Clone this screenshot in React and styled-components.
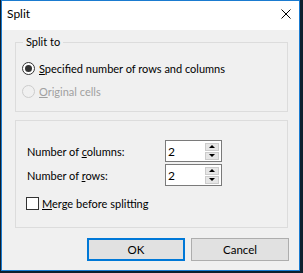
import React from "react";
import styled, { createGlobalStyle } from "styled-components";

const Global = createGlobalStyle`
  html, body {
    margin: 0;
    padding: 0;
    background: #0f1f2e;
  }
  body {
    font-family: Lato, "Segoe UI", sans-serif;
    font-size: 11px;
    color: #000;
  }
`;

const Window = styled.div`
  box-sizing: border-box;
  width: 299px;
  height: 271px;
  margin-left: 1px;
  border: 1px solid #1a7bd0;
  background: #f0f0f0;
  display: flex;
  flex-direction: column;
`;

const TitleBar = styled.div`
  height: 29px;
  background: #fff;
  display: flex;
  align-items: center;
  justify-content: space-between;
  padding: 0 8px 0 5px;
`;

const Title = styled.span`
  font-size: 12px;
  line-height: 16px;
  margin-top: -3px;
`;

const Close = styled.svg`
  width: 10px;
  height: 10px;
  margin-top: -4px;
`;

const Body = styled.div`
  display: flex;
  flex-direction: column;
  padding: 0 11px 0 13px;
`;

const Group = styled.div`
  position: relative;
  box-sizing: border-box;
  height: ${(p) => p.h}px;
  margin-top: ${(p) => p.top}px;
  border: 1px solid #dcdcdc;
  display: flex;
  flex-direction: column;
  padding: ${(p) => p.pad};
`;

const Legend = styled.span`
  position: absolute;
  top: -9px;
  left: 7px;
  padding: 0 3px;
  background: #f0f0f0;
  line-height: 16px;
`;

const RadioRow = styled.label`
  height: 22px;
  display: flex;
  align-items: center;
  margin-left: 6px;
  color: ${(p) => (p.disabled ? "#a0a0a0" : "#000")};
  & + & {
    margin-top: 1px;
  }
`;

const RadioDot = styled.span`
  box-sizing: border-box;
  width: 13px;
  height: 13px;
  border-radius: 50%;
  border: 1px solid ${(p) => (p.disabled ? "#cccccc" : "#333")};
  background: ${(p) => (p.disabled ? "#f0f0f0" : "#fff")};
  display: flex;
  align-items: center;
  justify-content: center;
  margin-right: 4px;
  &::after {
    content: "";
    display: ${(p) => (p.checked ? "block" : "none")};
    width: 7px;
    height: 7px;
    border-radius: 50%;
    background: #333;
  }
`;

const FieldGrid = styled.div`
  display: grid;
  grid-template-columns: 138px 57px;
  row-gap: 2px;
  align-items: center;
`;

const SpinBox = styled.div`
  box-sizing: border-box;
  height: 22px;
  border: 1px solid #7a7a7a;
  background: #fff;
  display: flex;
  align-items: center;
  justify-content: space-between;
  padding: 0 2px 0 2px;
  font-size: 12px;
`;

const SpinButtons = styled.div`
  display: flex;
  flex-direction: column;
  gap: 1px;
`;

const SpinBtn = styled.div`
  box-sizing: border-box;
  width: 14px;
  height: 8px;
  background: #e6e6e6;
  border: 1px solid #cccccc;
  display: flex;
  align-items: center;
  justify-content: center;
  &::after {
    content: "";
    width: 0;
    height: 0;
    border-left: 3px solid transparent;
    border-right: 3px solid transparent;
    ${(p) =>
      p.up
        ? "border-bottom: 3px solid #000;"
        : "border-top: 3px solid #000;"}
  }
`;

const CheckRow = styled.label`
  display: flex;
  align-items: center;
  margin-top: 11px;
  margin-left: -1px;
  height: 13px;
`;

const CheckBox = styled.span`
  box-sizing: border-box;
  width: 13px;
  height: 13px;
  border: 1px solid #333;
  background: #fff;
  margin-right: 3px;
`;

const Buttons = styled.div`
  display: flex;
  justify-content: flex-end;
  gap: 6px;
  margin-top: 10px;
  margin-right: -1px;
`;

const Button = styled.button`
  box-sizing: border-box;
  width: 98px;
  height: 23px;
  font: inherit;
  font-size: 11.5px;
  color: #000;
  background: #e1e1e1;
  border: ${(p) => (p.primary ? "2px solid #0078d7" : "1px solid #adadad")};
  padding: 0;
`;

export default function App() {
  return (
    <>
      <Global />
      <Window>
        <TitleBar>
          <Title>Split</Title>
          <Close viewBox="0 0 10 10">
            <path d="M0.5 0.5 L9.5 9.5 M9.5 0.5 L0.5 9.5" stroke="#000" strokeWidth="1" />
          </Close>
        </TitleBar>
        <Body>
          <Group h={70} top={12} pad="14px 0 0 0">
            <Legend>Split to</Legend>
            <RadioRow>
              <RadioDot checked />
              <span>
                <u>S</u>pecified number of rows and columns
              </span>
            </RadioRow>
            <RadioRow disabled>
              <RadioDot disabled />
              <span>
                <u>O</u>riginal cells
              </span>
            </RadioRow>
          </Group>
          <Group h={108} top={8} pad="19px 0 0 11px">
            <FieldGrid>
              <span>
                Number of <u>c</u>olumns:
              </span>
              <SpinBox>
                <span>2</span>
                <SpinButtons>
                  <SpinBtn up />
                  <SpinBtn />
                </SpinButtons>
              </SpinBox>
              <span>
                Number of <u>r</u>ows:
              </span>
              <SpinBox>
                <span>2</span>
                <SpinButtons>
                  <SpinBtn up />
                  <SpinBtn />
                </SpinButtons>
              </SpinBox>
            </FieldGrid>
            <CheckRow>
              <CheckBox />
              <span>
                <u>M</u>erge before splitting
              </span>
            </CheckRow>
          </Group>
          <Buttons>
            <Button primary>OK</Button>
            <Button>Cancel</Button>
          </Buttons>
        </Body>
      </Window>
    </>
  );
}
